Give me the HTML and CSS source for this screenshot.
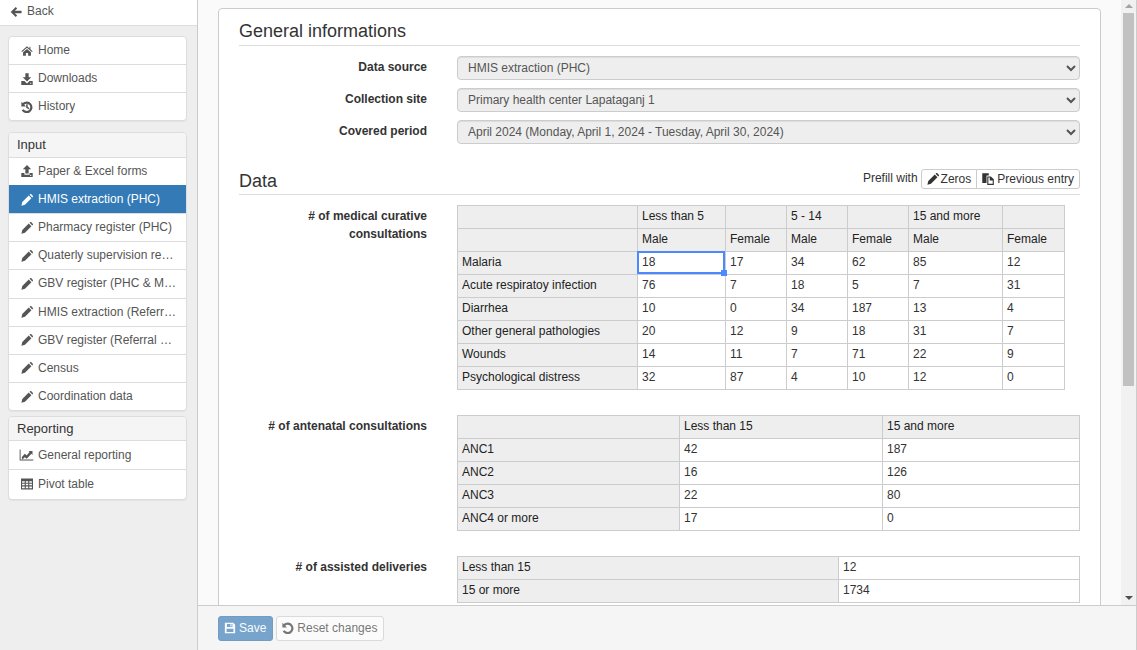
FILE: index.html
```html
<!DOCTYPE html>
<html lang="en">
<head>
    <meta charset="UTF-8">
    <title>General informations</title>
    <link rel="stylesheet" href="styles.css">
</head>
<body>
    <svg class="sprites" xmlns="http://www.w3.org/2000/svg">
        <symbol id="i-back" viewBox="0 0 14 14"><path d="M6.7 1.2 8.4 2.9 5.6 5.6H13.5v2.8H5.6l2.8 2.7-1.7 1.7L.8 7z"/></symbol>
        <symbol id="i-home" viewBox="0 1 14 12.5"><path d="M7 1.6 .4 7.4l.9 1L7 3.5l5.7 4.9.9-1-2.6-2.3V2.2H9.9v2L7 1.6zM7 4.9 2.4 8.8v4h3.3V9.7h2.6v3.1h3.3v-4z"/></symbol>
        <symbol id="i-download" viewBox="0.5 0.5 13 13"><path d="M5.2.8h3.6v4.4h2.8L7 9.8 2.4 5.2h2.8zM.8 9.2h3.4L7 12l2.8-2.8h3.4v4.2H.8zM10.4 11.1h1.2v1.1h-1.2z" fill-rule="evenodd"/></symbol>
        <symbol id="i-upload" viewBox="0.5 0.5 13 13"><path d="M7 .6l4.6 4.6H8.8v4.6H5.2V5.2H2.4zM.8 9.2h3.4v1.8h5.6V9.2h3.4v4.2H.8zM10.4 11.3h1.2v1.1h-1.2z" fill-rule="evenodd"/></symbol>
        <symbol id="i-history" viewBox="0.5 0.5 13 13"><path d="M.9 1.4v5h5L4 4.5a3.9 3.9 0 1 1-.7 4.9L1.2 10.6A6.3 6.3 0 1 0 2.3 2.8zM6.1 4h1.7v2.9l1.9 1.2-.9 1.4-2.7-1.7z"/></symbol>
        <symbol id="i-pencil" viewBox="0.5 0.5 13 13"><path d="M.9 13.1l1-3.9 7-7 2.9 2.9-7 7zM9.8 1.3l.5-.5a1 1 0 0 1 1.4 0l1.5 1.5a1 1 0 0 1 0 1.4l-.5.5z"/></symbol>
        <symbol id="i-chart" viewBox="0 0 16 14"><path d="M0 .6h1.1v11.7H16v1.1H0zM2.4 9.5 6 5.6l2.2 1.9 3.4-3.9-1.2-1.2H15v4.5l-1.3-1.3-5.4 5.9-2.3-2-2.7 2.8z"/></symbol>
        <symbol id="i-table" viewBox="0 0 11 10"><path d="M0 0h11v10H0zM1 2.4v1.4h2.4V2.4zm3.4 0v1.4h2.2V2.4zm3.2 0v1.4H10V2.4zM1 4.8v1.4h2.4V4.8zm3.4 0v1.4h2.2V4.8zm3.2 0v1.4H10V4.8zM1 7.2V9h2.4V7.2zm3.4 0V9h2.2V7.2zm3.2 0V9H10V7.2z" fill-rule="evenodd"/></symbol>
        <symbol id="i-paste" viewBox="0.5 0.5 13 13"><path d="M.8.8h7v2.4H5.4v8.2H.8zM6.2 4.2h3.9l3.2 3.2v6H6.2zm1.2 1.2v6.8h4.7V8.6H8.9V5.4z" fill-rule="evenodd"/></symbol>
        <symbol id="i-floppy" viewBox="0 0 14 14"><path d="M1 1h9.8L13 3.2V13H1zM3.4 2.2v3.6h6.4V2.2zM7.4 2.7h1.4v2.5H7.4zM3 8v3.8h8V8z" fill-rule="evenodd"/></symbol>
        <symbol id="i-undo" viewBox="0.5 0.5 13 13"><path d="M.9 1.4v5h5L4 4.5a3.9 3.9 0 1 1-.7 4.9L1.2 10.6A6.3 6.3 0 1 0 2.3 2.8z"/></symbol>
    </svg>

    <aside class="sidebar">
        <div class="back-bar">
            <svg class="icon"><use href="#i-back"/></svg>
            <span>Back</span>
        </div>

        <div class="list-group">
            <div class="list-item"><svg class="icon"><use href="#i-home"/></svg><span class="list-label">Home</span></div>
            <div class="list-item"><svg class="icon"><use href="#i-download"/></svg><span class="list-label">Downloads</span></div>
            <div class="list-item"><svg class="icon"><use href="#i-history"/></svg><span class="list-label">History</span></div>
        </div>

        <div class="list-group">
            <div class="list-title">Input</div>
            <div class="list-item"><svg class="icon"><use href="#i-upload"/></svg><span class="list-label">Paper &amp; Excel forms</span></div>
            <div class="list-item active"><svg class="icon"><use href="#i-pencil"/></svg><span class="list-label">HMIS extraction (PHC)</span></div>
            <div class="list-item"><svg class="icon"><use href="#i-pencil"/></svg><span class="list-label">Pharmacy register (PHC)</span></div>
            <div class="list-item"><svg class="icon"><use href="#i-pencil"/></svg><span class="list-label">Quaterly supervision report (PHC)</span></div>
            <div class="list-item"><svg class="icon"><use href="#i-pencil"/></svg><span class="list-label">GBV register (PHC &amp; Mobile)</span></div>
            <div class="list-item"><svg class="icon"><use href="#i-pencil"/></svg><span class="list-label">HMIS extraction (Referral hospital)</span></div>
            <div class="list-item"><svg class="icon"><use href="#i-pencil"/></svg><span class="list-label">GBV register (Referral hospital)</span></div>
            <div class="list-item"><svg class="icon"><use href="#i-pencil"/></svg><span class="list-label">Census</span></div>
            <div class="list-item"><svg class="icon"><use href="#i-pencil"/></svg><span class="list-label">Coordination data</span></div>
        </div>

        <div class="list-group reporting">
            <div class="list-title">Reporting</div>
            <div class="list-item tall"><svg class="icon wide"><use href="#i-chart"/></svg><span class="list-label">General reporting</span></div>
            <div class="list-item tall"><svg class="icon"><use href="#i-table"/></svg><span class="list-label">Pivot table</span></div>
        </div>
    </aside>

    <main class="main">
        <div class="main-row">
            <div class="content">
                <div class="panel">
                    <div class="section-head first">
                        <h3>General informations</h3>
                    </div>

                    <div class="field">
                        <label class="field-label">Data source</label>
                        <select class="form-control" disabled><option>HMIS extraction (PHC)</option></select>
                    </div>
                    <div class="field">
                        <label class="field-label">Collection site</label>
                        <select class="form-control" disabled><option>Primary health center Lapataganj 1</option></select>
                    </div>
                    <div class="field">
                        <label class="field-label">Covered period</label>
                        <select class="form-control" disabled><option>April 2024 (Monday, April 1, 2024 - Tuesday, April 30, 2024)</option></select>
                    </div>

                    <div class="section-head data">
                        <h3>Data</h3>
                        <div class="prefill">
                            <span class="prefill-label">Prefill with</span>
                            <div class="btn-group">
                                <button type="button" class="btn-xs"><svg class="icon"><use href="#i-pencil"/></svg>Zeros</button>
                                <button type="button" class="btn-xs"><svg class="icon"><use href="#i-paste"/></svg>Previous entry</button>
                            </div>
                        </div>
                    </div>

                    <div class="variable">
                        <div class="variable-label">
                            # of medical curative consultations
                        </div>
                        <table class="grid grid-curative">
                            <colgroup>
                                <col class="c180"><col class="c88"><col class="c61"><col class="c61"><col class="c61"><col class="c94"><col class="c62">
                            </colgroup>
                            <tr><th></th><th>Less than 5</th><th></th><th>5 - 14</th><th></th><th>15 and more</th><th></th></tr>
                            <tr><th></th><th>Male</th><th>Female</th><th>Male</th><th>Female</th><th>Male</th><th>Female</th></tr>
                            <tr><th>Malaria</th><td class="selected">18</td><td>17</td><td>34</td><td>62</td><td>85</td><td>12</td></tr>
                            <tr><th>Acute respiratoy infection</th><td>76</td><td>7</td><td>18</td><td>5</td><td>7</td><td>31</td></tr>
                            <tr><th>Diarrhea</th><td>10</td><td>0</td><td>34</td><td>187</td><td>13</td><td>4</td></tr>
                            <tr><th>Other general pathologies</th><td>20</td><td>12</td><td>9</td><td>18</td><td>31</td><td>7</td></tr>
                            <tr><th>Wounds</th><td>14</td><td>11</td><td>7</td><td>71</td><td>22</td><td>9</td></tr>
                            <tr><th>Psychological distress</th><td>32</td><td>87</td><td>4</td><td>10</td><td>12</td><td>0</td></tr>
                        </table>
                    </div>

                    <div class="variable">
                        <div class="variable-label"># of antenatal consultations</div>
                        <table class="grid grid-anc">
                            <colgroup>
                                <col class="c222"><col class="c203"><col class="c197">
                            </colgroup>
                            <tr><th></th><th>Less than 15</th><th>15 and more</th></tr>
                            <tr><th>ANC1</th><td>42</td><td>187</td></tr>
                            <tr><th>ANC2</th><td>16</td><td>126</td></tr>
                            <tr><th>ANC3</th><td>22</td><td>80</td></tr>
                            <tr><th>ANC4 or more</th><td>17</td><td>0</td></tr>
                        </table>
                    </div>

                    <div class="variable">
                        <div class="variable-label"># of assisted deliveries</div>
                        <table class="grid grid-anc">
                            <colgroup>
                                <col class="c381"><col class="c241">
                            </colgroup>
                            <tr><th>Less than 15</th><td>12</td></tr>
                            <tr><th>15 or more</th><td>1734</td></tr>
                        </table>
                    </div>
                </div>
            </div>

            <div class="scrollbar">
                <div class="scroll-arrow up"></div>
                <div class="scroll-track"><div class="scroll-thumb"></div></div>
                <div class="scroll-arrow down"></div>
            </div>
        </div>

        <footer class="footer">
            <button type="button" class="btn btn-primary" disabled><svg class="icon"><use href="#i-floppy"/></svg>Save</button>
            <button type="button" class="btn btn-default" disabled><svg class="icon"><use href="#i-undo"/></svg>Reset changes</button>
        </footer>
    </main>
</body>
</html>
```

FILE: styles.css
```css
/* Basic styling */
* {
    box-sizing: border-box;
}

body {
    font-family: "Liberation Sans", Arial, sans-serif;
    font-size: 12px;
    line-height: 1.42857;
    color: #333;
    background-color: #eee;
    display: flex;
    height: 100vh;
    margin: 0;
    overflow: hidden;
}

.sprites {
    display: none;
}

.icon {
    width: 12px;
    height: 12px;
    fill: currentColor;
    flex: none;
}

/* Sidebar */
.sidebar {
    width: 198px;
    flex: none;
    border-right: 1px solid #ccc;
}

.back-bar {
    display: flex;
    align-items: center;
    gap: 5px;
    height: 26px;
    padding: 0 0 1px 10px;
    background: white;
    border-bottom: 1px solid #ddd;
    color: #555;
    margin-bottom: 10px;
}

.list-group {
    margin: 0 10px 11px 8px;
    background: white;
    border: 1px solid #ddd;
    border-radius: 4px;
    box-shadow: 0 1px 1px rgba(0, 0, 0, 0.05);
    overflow: hidden;
}

.list-group.reporting {
    margin-top: -6.2px;
}

.list-title {
    height: 23.4px;
    padding: 2px 8px 0;
    font-size: 13px;
    line-height: 20px;
    background: #f5f5f5;
    color: #333;
}

.list-item {
    display: flex;
    align-items: center;
    gap: 5px;
    padding: 5px 8px 5px 12px;
    border-top: 1px solid #ddd;
    color: #555;
}

.list-group > .list-item:first-child {
    border-top: none;
}

.list-item.tall {
    padding: 5.5px 8px 5.5px 12px;
}

.list-item.active {
    background: #337ab7;
    border-top-color: #337ab7;
    color: white;
}

.list-label {
    min-width: 0;
    overflow: hidden;
    white-space: nowrap;
    text-overflow: ellipsis;
}

.icon.wide {
    width: 15px;
    margin: 0 -1px 0 -2px;
}

/* Main area */
.main {
    flex: 1;
    min-width: 0;
    display: flex;
    flex-direction: column;
    border-right: 1px solid #ccc;
}

.main-row {
    flex: 1;
    min-height: 0;
    display: flex;
    background: #fafafa;
}

.content {
    flex: 1;
    min-width: 0;
    padding: 8px 20px 0;
    overflow: hidden;
}

.panel {
    background: white;
    border: 1px solid #ccc;
    border-radius: 4px;
    padding: 0 20px 40px;
}

.section-head {
    display: flex;
    justify-content: space-between;
    align-items: flex-end;
    border-bottom: 1px solid #ddd;
    padding-bottom: 3px;
}

.section-head.first {
    margin-bottom: 10px;
    padding-top: 11px;
}

.section-head.data {
    margin-top: 25px;
    margin-bottom: 10px;
    padding-bottom: 2px;
}

h3 {
    margin: 0;
    font-size: 18px;
    font-weight: normal;
    line-height: 22px;
    color: #333;
}

.field {
    display: flex;
    gap: 30px;
    margin-bottom: 8px;
}

.field-label {
    width: 188px;
    flex: none;
    padding-top: 3px;
    text-align: right;
    font-weight: bold;
}

.form-control {
    flex: 1;
    min-width: 0;
    height: 24px;
    padding: 0 6px;
    font-family: inherit;
    font-size: 12px;
    color: #555;
    background-color: #eee;
    border: 1px solid #ccc;
    border-radius: 4px;
    box-shadow: inset 0 1px 1px rgba(0, 0, 0, 0.075);
    opacity: 1;
}

.prefill {
    display: flex;
    align-items: flex-start;
    gap: 3px;
    margin-bottom: 3px;
}

.prefill-label {
    line-height: 18px;
}

.btn-group {
    display: flex;
}

.btn-xs {
    display: flex;
    align-items: center;
    gap: 3px;
    height: 20px;
    font-family: inherit;
    font-size: 12px;
    color: #333;
    background: white;
    border: 1px solid #ccc;
}

.btn-xs:first-child {
    gap: 2px;
    padding: 0 5px;
    border-radius: 3px 0 0 3px;
}

.btn-xs:last-child {
    margin-left: -1px;
    padding: 0 5px;
    border-radius: 0 3px 3px 0;
}

/* Data tables */
.variable {
    display: flex;
    gap: 30px;
    margin-bottom: 25px;
}

.variable-label {
    width: 188px;
    flex: none;
    text-align: right;
    font-weight: bold;
    line-height: 18px;
    padding-top: 2px;
}

.grid {
    table-layout: fixed;
    border-collapse: separate;
    border-spacing: 0;
    border-top: 1px solid #ccc;
    border-left: 1px solid #ccc;
    color: #222;
}

.grid-curative {
    width: 608px;
}

.grid-anc {
    width: 623px;
}

.c61 { width: 61px; }
.c62 { width: 62px; }
.c88 { width: 88px; }
.c94 { width: 94px; }
.c180 { width: 180px; }
.c197 { width: 197px; }
.c203 { width: 203px; }
.c222 { width: 222px; }
.c241 { width: 241px; }
.c381 { width: 381px; }

.grid th,
.grid td {
    height: 23px;
    padding: 0 4px;
    border-right: 1px solid #ccc;
    border-bottom: 1px solid #ccc;
    text-align: left;
    vertical-align: top;
    font-weight: normal;
    line-height: 20px;
    white-space: nowrap;
    overflow: hidden;
}

.grid th {
    background: #eee;
}

.grid td {
    color: #333;
    background: white;
}

.grid td.selected {
    position: relative;
    overflow: visible;
}

.grid td.selected::before {
    content: "";
    position: absolute;
    left: -1px;
    top: -1px;
    right: 0;
    bottom: 0;
    border: 2px solid #4b89ff;
}

.grid td.selected::after {
    content: "";
    position: absolute;
    right: -2px;
    bottom: -2px;
    width: 6px;
    height: 6px;
    background: #4b89ff;
}

/* Scrollbar */
.scrollbar {
    width: 15px;
    flex: none;
    display: flex;
    flex-direction: column;
    background: #f1f1f1;
}

.scroll-arrow {
    height: 13px;
    flex: none;
    display: flex;
    justify-content: center;
}

.scroll-arrow::before {
    content: "";
    width: 0;
    height: 0;
    border-left: 4px solid transparent;
    border-right: 4px solid transparent;
}

.scroll-arrow.up::before {
    margin-top: 4px;
    border-bottom: 4px solid #a3a3a3;
}

.scroll-arrow.down::before {
    margin-top: 4px;
    border-top: 4px solid #505050;
}

.scroll-track {
    flex: 1;
    padding: 0 2px;
}

.scroll-thumb {
    height: 373px;
    background: #c1c1c1;
}

/* Footer */
.footer {
    flex: none;
    height: 45px;
    display: flex;
    gap: 3px;
    padding: 10px 20px 0;
    background: #f5f5f5;
    border-top: 1px solid #ccc;
}

.btn {
    display: flex;
    align-items: center;
    gap: 3px;
    height: 25px;
    padding: 0 6px 1px 5px;
    font-family: inherit;
    font-size: 12px;
    border: 1px solid transparent;
    border-radius: 3px;
    opacity: 0.65;
}

.btn-primary {
    color: white;
    background: #337ab7;
    border-color: #2e6da4;
}

.btn-default {
    color: #333;
    background: white;
    border-color: #ccc;
}
```
